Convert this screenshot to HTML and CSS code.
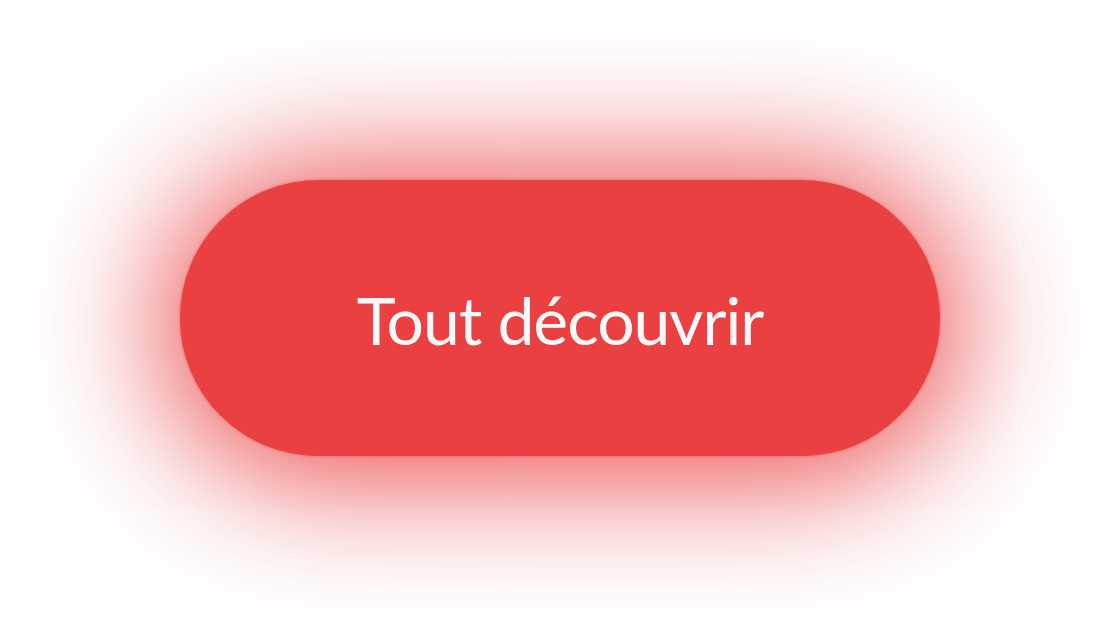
FILE: index.html
```html
<!DOCTYPE html>
<html lang="fr">
<head>
<meta charset="utf-8">
<title>Tout découvrir</title>
<link rel="stylesheet" href="styles.css">
</head>
<body>
<main class="stage">
  <a class="cta" href="#">Tout découvrir</a>
</main>
</body>
</html>
```
FILE: styles.css
```css
html, body {
  margin: 0;
  padding: 0;
  background: #ffffff;
}
.stage {
  width: 100vw;
  height: 100vh;
  display: flex;
  align-items: center;
  justify-content: center;
}
.cta {
  box-sizing: border-box;
  width: 760px;
  height: 276px;
  border-radius: 138px;
  background: #ea4041;
  color: #f8f8f8;
  text-decoration: none;
  display: flex;
  align-items: center;
  justify-content: center;
  padding-top: 2px;
  font-family: "Lato", "Noto Sans", sans-serif;
  font-size: 66px;
  font-weight: 400;
  letter-spacing: -1px;
  box-shadow: 0 0 3px rgba(200, 50, 50, 0.5), 0 6px 130px 18px rgba(234, 64, 65, 0.95);
}
```
